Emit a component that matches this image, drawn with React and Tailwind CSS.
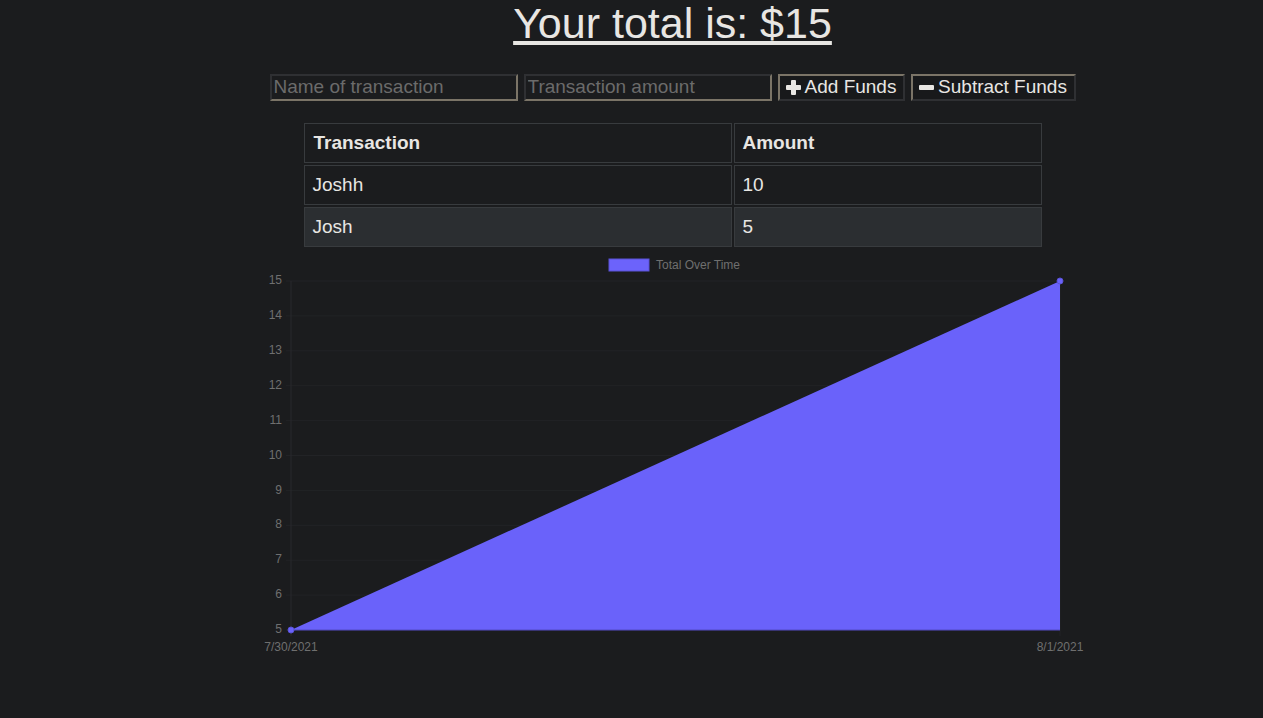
import React from "react";

function PlusIcon() {
  return (
    <svg width="15" height="15" viewBox="0 0 15 15" className="shrink-0">
      <rect x="5" y="0" width="5" height="15" rx="1" fill="#e8e6e3" />
      <rect x="0" y="5" width="15" height="5" rx="1" fill="#e8e6e3" />
    </svg>
  );
}

function MinusIcon() {
  return (
    <svg width="15" height="15" viewBox="0 0 15 15" className="shrink-0">
      <rect x="0" y="5" width="15" height="5" rx="1" fill="#e8e6e3" />
    </svg>
  );
}

function Chart() {
  const ticks = [15, 14, 13, 12, 11, 10, 9, 8, 7, 6, 5];
  const yOf = (v) => 29 + 34.9 * (15 - v);
  const x0 = 38;
  const x1 = 807;
  return (
    <svg width="840" height="410" className="block" style={{ fontFamily: '"Liberation Sans", Arial, sans-serif' }}>
      <rect x="356" y="7" width="40" height="12" fill="#6c63fb" stroke="#5a52d6" strokeWidth="1" />
      <text x="403" y="16.5" fontSize="12" fill="#6f6f6f">Total Over Time</text>
      {ticks.map((v) => (
        <g key={v}>
          <line x1={x0 - 5} x2={x1} y1={yOf(v)} y2={yOf(v)} stroke="#222326" strokeWidth="1" />
          <text x="29" y={yOf(v)} fontSize="12" fill="#6f6f6f" textAnchor="end" dominantBaseline="middle">{v}</text>
        </g>
      ))}
      <line x1={x0} x2={x0} y1={yOf(15)} y2={yOf(5) + 6} stroke="#28292c" strokeWidth="1" />
      <line x1={x1} x2={x1} y1={yOf(15)} y2={yOf(5) + 6} stroke="#222326" strokeWidth="1" />
      <polygon points={`${x0},${yOf(5)} ${x1},${yOf(15)} ${x1},${yOf(5)}`} fill="#6a62fa" />
      <line x1={x0} x2={x1} y1={yOf(5)} y2={yOf(5)} stroke="#524bc4" strokeWidth="1" />
      <circle cx={x0} cy={yOf(5)} r="3" fill="#6a62fa" stroke="#5a52d6" strokeWidth="1" />
      <circle cx={x1} cy={yOf(15)} r="3" fill="#6a62fa" stroke="#5a52d6" strokeWidth="1" />
      <text x={x0} y="399" fontSize="12" fill="#6f6f6f" textAnchor="middle">7/30/2021</text>
      <text x={x1} y="399" fontSize="12" fill="#6f6f6f" textAnchor="middle">8/1/2021</text>
    </svg>
  );
}

export default function App() {
  const rows = [
    { name: "Joshh", amount: "10", bg: "bg-[#1b1c1e]" },
    { name: "Josh", amount: "5", bg: "bg-[#2b2e31]" },
  ];
  return (
    <div className="min-h-screen bg-[#1b1c1e] text-[#e8e6e3]" style={{ fontFamily: '"Liberation Sans", Arial, sans-serif' }}>
      <div className="pl-[82px] flex flex-col items-center">
        <h1 className="text-[43px] leading-[46px] underline m-0 font-normal">Your total is: $15</h1>

        <div className="mt-[28px] flex items-center gap-[6px] text-[19px]">
          <input
            type="text"
            placeholder="Name of transaction"
            className="w-[248px] h-[27px] px-[2px] bg-[#1b1c1e] text-[#e8e6e3] placeholder:text-[#6b6b6b] border-2 border-t-[#2f3033] border-l-[#2f3033] border-b-[#7b7467] border-r-[#7b7467] outline-none"
          />
          <input
            type="text"
            placeholder="Transaction amount"
            className="w-[248px] h-[27px] px-[2px] bg-[#1b1c1e] text-[#e8e6e3] placeholder:text-[#6b6b6b] border-2 border-t-[#2f3033] border-l-[#2f3033] border-b-[#7b7467] border-r-[#7b7467] outline-none"
          />
          <button className="w-[127px] h-[27px] flex items-center justify-center gap-[4px] bg-[#18191b] text-[#e8e6e3] border-2 border-t-[#7b7467] border-l-[#7b7467] border-b-[#2f3033] border-r-[#2f3033]">
            <PlusIcon />
            <span>Add Funds</span>
          </button>
          <button className="w-[165px] h-[27px] flex items-center justify-center gap-[4px] bg-[#18191b] text-[#e8e6e3] border-2 border-t-[#7b7467] border-l-[#7b7467] border-b-[#2f3033] border-r-[#2f3033]">
            <MinusIcon />
            <span>Subtract Funds</span>
          </button>
        </div>

        <table className="mt-[20px] border-separate border-spacing-[2px] text-[19px] leading-[22px]">
          <thead>
            <tr>
              <th className="w-[428px] h-[40px] px-[9px] py-[8px] text-left font-bold border border-[#383b3e]">Transaction</th>
              <th className="w-[308px] h-[40px] px-[8px] py-[8px] text-left font-bold border border-[#383b3e]">Amount</th>
            </tr>
          </thead>
          <tbody>
            {rows.map((r) => (
              <tr key={r.name} className={r.bg}>
                <td className="h-[40px] px-[8px] py-[8px] border border-[#383b3e]">{r.name}</td>
                <td className="h-[40px] px-[8px] py-[8px] border border-[#383b3e]">{r.amount}</td>
              </tr>
            ))}
          </tbody>
        </table>

        <div className="mt-[3px]">
          <Chart />
        </div>
      </div>
    </div>
  );
}
